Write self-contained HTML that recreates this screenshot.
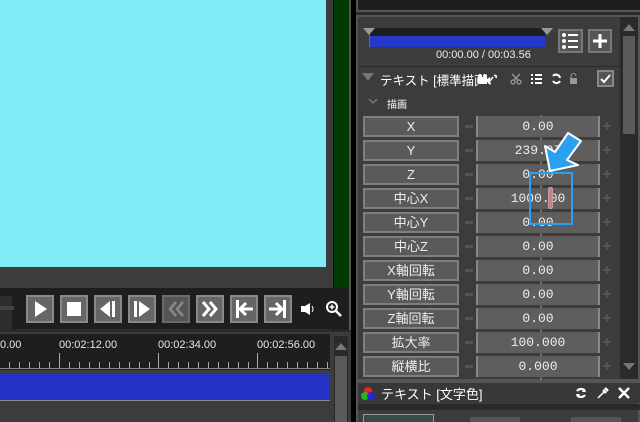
<!DOCTYPE html><html><head><meta charset="utf-8"><style>
*{margin:0;padding:0;box-sizing:border-box}
body{width:640px;height:422px;background:#2a2a2a;position:relative;overflow:hidden;font-family:"Liberation Sans","Noto Sans CJK JP",sans-serif;color:#fff}
.a{position:absolute}
.btn{position:absolute;top:295px;width:28px;height:28px;background:#666;border:2px solid #8a8a8a}
.btn svg{position:absolute;left:0;top:0}
.lab{position:absolute;left:363px;width:96px;height:21px;background:#5a5a5a;border:2px solid #7f7f7f;font-size:13px;text-align:center;line-height:17px;color:#eee}
.val{position:absolute;left:476px;width:124px;height:21px;background:#5e5e5e;border-left:2px solid #888;border-right:2px solid #888;font-family:"Liberation Mono",monospace;font-size:13px;text-align:center;line-height:21px;color:#eee}
.mn{position:absolute;left:465px;width:8px;height:3px;background:#555}
.pl{position:absolute;left:603px;width:8px;height:8px}
.pl:before{content:"";position:absolute;left:3px;top:0;width:2px;height:8px;background:#555}
.pl:after{content:"";position:absolute;left:0;top:3px;width:8px;height:2px;background:#555}
.tl{position:absolute;top:339px;font-size:11px;color:#e8e8e8}
</style></head><body>
<div class="a" style="left:0;top:0;width:326px;height:267px;background:#80eaf5"></div>
<div class="a" style="left:0;top:267px;width:333px;height:21px;background:#3c3c3c"></div>
<div class="a" style="left:326px;top:0;width:7px;height:267px;background:#3c3c3c"></div>
<div class="a" style="left:333px;top:0;width:17px;height:330px;background:#003a00;border-left:1px solid #111"></div>
<div class="a" style="left:341px;top:0;width:1px;height:330px;background:#1a2a1a"></div>
<div class="a" style="left:349px;top:0;width:2px;height:330px;background:#555"></div>
<div class="a" style="left:351px;top:0;width:5px;height:422px;background:#000"></div>
<div class="a" style="left:0;top:288px;width:349px;height:41px;background:#1e1e1e"></div>
<div class="a" style="left:0;top:296px;width:12px;height:33px;background:#2e2e2e"></div>
<div class="a" style="left:0;top:306px;width:14px;height:4px;background:#444"></div>
<div class="btn" style="left:26px"><svg width="24" height="24"><path d="M7 4L19 12L7 20Z" fill="#fff"/></svg></div>
<div class="btn" style="left:60px"><svg width="24" height="24"><rect x="5" y="5" width="14" height="14" fill="#fff"/></svg></div>
<div class="btn" style="left:94px"><svg width="24" height="24"><path d="M4 12L14 4V20Z" fill="#fff"/><rect x="16" y="4" width="3" height="16" fill="#fff"/></svg></div>
<div class="btn" style="left:128px"><svg width="24" height="24"><rect x="4" y="4" width="3" height="16" fill="#fff"/><path d="M9 4L20 12L9 20Z" fill="#fff"/></svg></div>
<div class="btn" style="left:162px;background:#555;border-color:#6a6a6a"><svg width="24" height="24"><path d="M12 5L6 12L12 19M19 5L13 12L19 19" stroke="#888" stroke-width="2.5" fill="none"/></svg></div>
<div class="btn" style="left:196px"><svg width="24" height="24"><path d="M5 5L11 12L5 19M12 5L18 12L12 19" stroke="#fff" stroke-width="3" fill="none"/></svg></div>
<div class="btn" style="left:230px"><svg width="24" height="24"><rect x="4" y="3" width="3" height="18" fill="#fff"/><path d="M8 12H21M14 6L8 12L14 18" stroke="#fff" stroke-width="3" fill="none"/></svg></div>
<div class="btn" style="left:264px"><svg width="24" height="24"><rect x="17" y="3" width="3" height="18" fill="#fff"/><path d="M3 12H16M10 6L16 12L10 18" stroke="#fff" stroke-width="3" fill="none"/></svg></div>
<svg class="a" style="left:300px;top:302px" width="16" height="14"><path d="M1 4H5L10 1V13L5 10H1Z" fill="#fff"/><path d="M12 4Q14 7 12 10" stroke="#fff" fill="none"/></svg>
<svg class="a" style="left:325px;top:300px" width="18" height="18"><circle cx="7" cy="7" r="5" stroke="#fff" stroke-width="2" fill="none"/><path d="M11 11L16 16" stroke="#fff" stroke-width="2.5"/><path d="M4.5 7H9.5M7 4.5V9.5" stroke="#fff" stroke-width="1.5"/></svg>
<div class="a" style="left:0;top:332px;width:351px;height:90px;background:#3c3c3c"></div>
<div class="a" style="left:0;top:334px;width:330px;height:36px;background:#1e1e1e"></div>
<div class="tl" style="left:0">0.00</div>
<div class="tl" style="left:59px">00:02:12.00</div>
<div class="tl" style="left:158px">00:02:34.00</div>
<div class="tl" style="left:257px">00:02:56.00</div>
<svg class="a" style="left:0;top:350px" width="330" height="20"><g stroke="#aaa"><path d="M9.5 12V18M19.5 12V18M29.5 12V18M39.5 12V18M49.5 12V18M69.5 12V18M79.5 12V18M89.5 12V18M99.5 12V18M109.5 12V18M119.5 12V18M129.5 12V18M139.5 12V18M149.5 12V18M168.5 12V18M178.5 12V18M188.5 12V18M198.5 12V18M208.5 12V18M218.5 12V18M228.5 12V18M238.5 12V18M248.5 12V18M267.5 12V18M277.5 12V18M287.5 12V18M297.5 12V18M307.5 12V18M317.5 12V18M327.5 12V18"/><path d="M59.5 3V18M158.5 3V18M257.5 3V18"/></g><path d="M0 18.5H330" stroke="#888"/></svg>
<div class="a" style="left:0;top:374px;width:330px;height:26px;background:#2432c4"></div>
<div class="a" style="left:0;top:400px;width:330px;height:1px;background:#888"></div>
<div class="a" style="left:334px;top:336px;width:14px;height:86px;background:#2a2a2a"></div>
<svg class="a" style="left:334px;top:341px" width="14" height="10"><path d="M1 9L7 2L13 9Z" fill="#777"/></svg>
<div class="a" style="left:335px;top:356px;width:12px;height:66px;background:#5a5a5a"></div>
<!-- right -->
<div class="a" style="left:356px;top:0;width:284px;height:12px;background:#1e1e1e;border-left:2px solid #555;border-bottom:2px solid #555"></div>
<div class="a" style="left:356px;top:15px;width:284px;height:366px;background:#3c3c3c;border:2px solid #555"></div>
<div class="a" style="left:369px;top:28px;width:176px;height:8px;background:#1e1e1e"></div>
<div class="a" style="left:369px;top:36px;width:176px;height:11px;background:#2638c8"></div>
<div class="a" style="left:369px;top:30px;width:1px;height:17px;background:#c44"></div>
<svg class="a" style="left:363px;top:28px" width="190" height="9"><path d="M0 0H12L6 7Z M178 0H190L184 7Z" fill="#999"/></svg>
<div class="a" style="left:436px;top:49px;font-size:11px;color:#eee">00:00.00 / 00:03.56</div>
<div class="a" style="left:558px;top:29px;width:25px;height:24px;background:#555;border:2px solid #777"></div>
<svg class="a" style="left:560px;top:31px" width="21" height="20"><g fill="#fff"><circle cx="4" cy="4" r="2"/><circle cx="4" cy="10" r="2"/><circle cx="4" cy="16" r="2"/><rect x="8" y="3" width="10" height="2"/><rect x="8" y="9" width="10" height="2"/><rect x="8" y="15" width="10" height="2"/></g></svg>
<div class="a" style="left:588px;top:29px;width:24px;height:24px;background:#555;border:2px solid #777"></div>
<svg class="a" style="left:590px;top:31px" width="20" height="20"><path d="M10 3V17M3 10H17" stroke="#fff" stroke-width="3"/></svg>
<div class="a" style="left:358px;top:66px;width:262px;height:1px;background:#2a2a2a"></div>
<svg class="a" style="left:362px;top:73px" width="12" height="9"><path d="M0 0H12L6 8Z" fill="#777"/></svg>
<div class="a" style="left:380px;top:70px;width:98px;height:18px;overflow:hidden;white-space:nowrap;font-size:12.5px;color:#fff">テキスト [標準描画]</div>
<svg class="a" style="left:478px;top:72px" width="120" height="14">
<g fill="#fff"><rect x="0" y="5" width="9" height="7"/><circle cx="2" cy="4" r="2"/><circle cx="7" cy="4" r="2"/><path d="M9 7L12 5V12L9 10Z"/></g>
<path d="M14 10L18 5M16 11.5Q13 12 14 9M19 3.5Q22 3 21 6" stroke="#fff" stroke-width="1.6" fill="none" transform="translate(-3,0)"/>
<g stroke="#999" fill="none" stroke-width="1.3"><circle cx="35" cy="10" r="2"/><circle cx="41" cy="10" r="2"/><path d="M36 8L42 2M40 8L34 2"/></g>
<g fill="#fff"><rect x="53" y="2" width="2" height="2"/><rect x="53" y="6" width="2" height="2"/><rect x="53" y="10" width="2" height="2"/><rect x="57" y="2" width="7" height="2"/><rect x="57" y="6" width="7" height="2"/><rect x="57" y="10" width="7" height="2"/></g>
<path d="M75 4A4 4 0 0 1 82 6M82 9A4 4 0 0 1 75 9" stroke="#fff" stroke-width="2" fill="none"/>
<g fill="#999"><rect x="92" y="6" width="7" height="6"/><path d="M93 6V4A2.5 2.5 0 0 1 98 4" stroke="#999" fill="none"/></g>
</svg>
<div class="a" style="left:597px;top:70px;width:17px;height:17px;border:2px solid #888;background:#555"></div>
<svg class="a" style="left:599px;top:72px" width="13" height="13"><path d="M2 7L5 10L11 3" stroke="#fff" stroke-width="2" fill="none"/></svg>
<svg class="a" style="left:368px;top:98px" width="10" height="7"><path d="M1 1L5 5L9 1" stroke="#777" stroke-width="1.5" fill="none"/></svg>
<div class="a" style="left:387px;top:96px;font-size:10px;color:#fff">描画</div>
<div class="a" style="left:540px;top:115px;width:2px;height:266px;background:#6a6a6a"></div>
<div class="lab" style="top:116px">X</div><div class="mn" style="top:125px"></div><div class="val" style="top:116px">0.00</div><div class="pl" style="top:122px"></div>
<div class="lab" style="top:140px">Y</div><div class="mn" style="top:149px"></div><div class="val" style="top:140px">239.97</div><div class="pl" style="top:146px"></div>
<div class="lab" style="top:164px">Z</div><div class="mn" style="top:173px"></div><div class="val" style="top:164px">0.00</div><div class="pl" style="top:170px"></div>
<div class="lab" style="top:188px">中心X</div><div class="mn" style="top:197px"></div><div class="val" style="top:188px">1000.00</div><div class="pl" style="top:194px"></div>
<div class="lab" style="top:212px">中心Y</div><div class="mn" style="top:221px"></div><div class="val" style="top:212px">0.00</div><div class="pl" style="top:218px"></div>
<div class="lab" style="top:236px">中心Z</div><div class="mn" style="top:245px"></div><div class="val" style="top:236px">0.00</div><div class="pl" style="top:242px"></div>
<div class="lab" style="top:260px">X軸回転</div><div class="mn" style="top:269px"></div><div class="val" style="top:260px">0.00</div><div class="pl" style="top:266px"></div>
<div class="lab" style="top:284px">Y軸回転</div><div class="mn" style="top:293px"></div><div class="val" style="top:284px">0.00</div><div class="pl" style="top:290px"></div>
<div class="lab" style="top:308px">Z軸回転</div><div class="mn" style="top:317px"></div><div class="val" style="top:308px">0.00</div><div class="pl" style="top:314px"></div>
<div class="lab" style="top:332px">拡大率</div><div class="mn" style="top:341px"></div><div class="val" style="top:332px">100.000</div><div class="pl" style="top:338px"></div>
<div class="lab" style="top:356px">縦横比</div><div class="mn" style="top:365px"></div><div class="val" style="top:356px">0.000</div><div class="pl" style="top:362px"></div>
<div class="a" style="left:548px;top:187px;width:5px;height:22px;background:#b88;border:1px solid #c99;border-radius:2px"></div>
<div class="a" style="left:529px;top:172px;width:44px;height:53px;border:2px solid #2aa0f0"></div>
<svg class="a" style="left:0;top:0" width="640" height="422"><path d="M550 171L545 146L555 152L568 133L581 141L567 160L578 165Z" fill="#2aa0f0" stroke="#fff" stroke-width="2" stroke-linejoin="round"/></svg>
<div class="a" style="left:620px;top:17px;width:18px;height:362px;background:#2a2a2a"></div>
<svg class="a" style="left:622px;top:22px" width="14" height="10"><path d="M1 9L7 2L13 9Z" fill="#777"/></svg>
<div class="a" style="left:623px;top:36px;width:12px;height:98px;background:#5a5a5a"></div>
<svg class="a" style="left:622px;top:362px" width="14" height="10"><path d="M1 1L7 8L13 1Z" fill="#777"/></svg>
<div class="a" style="left:356px;top:381px;width:284px;height:41px;background:#3c3c3c;border:2px solid #555;border-bottom:none"></div>
<div class="a" style="left:358px;top:383px;width:282px;height:20px;background:#383838"></div>
<svg class="a" style="left:360px;top:386px" width="16" height="16"><circle cx="8" cy="5" r="4" fill="#e22"/><circle cx="5" cy="10" r="4" fill="#2c2" opacity=".85"/><circle cx="11" cy="10" r="4" fill="#22e" opacity=".85"/></svg>
<div class="a" style="left:381px;top:384px;font-size:13px;color:#fff">テキスト [文字色]</div>
<svg class="a" style="left:574px;top:386px" width="14" height="14"><path d="M3 5A5 5 0 0 1 11 5M11 9A5 5 0 0 1 3 9" stroke="#fff" stroke-width="2.2" fill="none"/><path d="M10 2L12 6L8 6Z M4 12L2 8L6 8Z" fill="#fff"/></svg>
<svg class="a" style="left:596px;top:386px" width="14" height="14"><path d="M2 12L9 5" stroke="#fff" stroke-width="1.5"/><path d="M7 4L10 7M9 2L12 5" stroke="#fff" stroke-width="2.5"/></svg>
<svg class="a" style="left:618px;top:387px" width="12" height="12"><path d="M1 1L11 11M11 1L1 11" stroke="#fff" stroke-width="2.5"/></svg>
<div class="a" style="left:358px;top:404px;width:282px;height:6px;background:#2a2a2a"></div>
<div class="a" style="left:363px;top:414px;width:71px;height:8px;background:#3a4a48;border:1px solid #999;border-bottom:none"></div>
<div class="a" style="left:470px;top:417px;width:50px;height:5px;background:#555"></div>
<div class="a" style="left:571px;top:417px;width:50px;height:5px;background:#555"></div>
</body></html>
